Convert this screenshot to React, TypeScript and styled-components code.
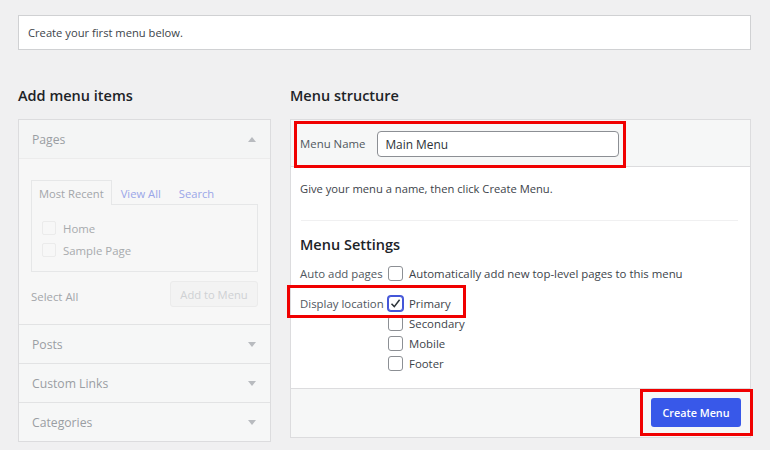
import React from "react";
import styled, { createGlobalStyle } from "styled-components";

const Global = createGlobalStyle`
  html, body { margin: 0; padding: 0; background: #f0f0f1; }
  body { font-family: "Open Sans", "Noto Sans", sans-serif; font-size: 11.2px; color: #3c434a; }
  * { box-sizing: border-box; }
`;

const Page = styled.div`
  width: 770px;
  height: 450px;
  padding: 15px 19px 0 18px;
  overflow: hidden;
`;

const Notice = styled.div`
  height: 35px;
  background: #fff;
  border: 1px solid #d0d1d3;
  display: flex;
  align-items: center;
  padding: 0 9px;
  font-size: 11.2px;
  color: #3c434a;
`;

const Columns = styled.div`
  display: grid;
  grid-template-columns: 253px 461px;
  column-gap: 19px;
  margin-top: 36px;
`;

const Column = styled.div`
  display: flex;
  flex-direction: column;
`;

const Heading = styled.h2`
  margin: 0 0 13px;
  height: 20px;
  line-height: 20px;
  font-size: 14.5px;
  font-weight: 600;
  color: #1d2327;
`;

/* ---------- Left panel ---------- */

const SidePanel = styled.div`
  border: 1px solid #dcdcde;
  background: #f6f7f7;
  color: #a7aaad;
`;

const SectionHead = styled.div<{ $first?: boolean }>`
  height: 39px;
  display: flex;
  align-items: center;
  justify-content: space-between;
  padding: 0 14px 0 13px;
  border-top: ${(p) => (p.$first ? "none" : "1px solid #e2e3e4")};
  border-bottom: ${(p) => (p.$first ? "1px solid #ececec" : "none")};
  background: ${(p) => (p.$first ? "#f4f5f5" : "transparent")};
  font-size: 12.2px;
  color: #9a9ea3;
`;

const Arrow = styled.span<{ $up?: boolean }>`
  width: 0;
  height: 0;
  border-left: 4px solid transparent;
  border-right: 4px solid transparent;
  ${(p) =>
    p.$up
      ? "border-bottom: 5px solid #b8bbbf;"
      : "border-top: 5px solid #b8bbbf;"}
`;

const PagesBody = styled.div`
  padding: 21px 12px 17px 12px;
  background: #f7f7f7;
`;

const Tabs = styled.div`
  display: flex;
  align-items: flex-end;
  height: 24px;
`;

const Tab = styled.div<{ $active?: boolean }>`
  height: 25px;
  display: flex;
  align-items: center;
  padding: 0 ${(p) => (p.$active ? "7px" : "8px")};
  border: ${(p) => (p.$active ? "1px solid #e6e7e8" : "1px solid transparent")};
  border-bottom: none;
  background: ${(p) => (p.$active ? "#f7f7f7" : "transparent")};
  color: ${(p) => (p.$active ? "#a3a6aa" : "#9aa6e8")};
  margin-bottom: -1px;
  position: relative;
  font-size: 11.2px;
`;

const TabPanel = styled.div`
  border: 1px solid #e6e7e8;
  height: 68px;
  padding: 15px 10px 0;
  display: flex;
  flex-direction: column;
  gap: 6px;
`;

const ItemRow = styled.label`
  display: flex;
  align-items: center;
  gap: 7px;
  height: 16px;
  color: #a7aaad;
  font-size: 11.4px;
`;

const GhostBox = styled.span`
  width: 14px;
  height: 14px;
  border: 1px solid #ebebeb;
  border-radius: 2px;
  background: #f7f7f7;
`;

const SelectRow = styled.div`
  margin-top: 9px;
  display: flex;
  align-items: center;
  justify-content: space-between;
  height: 26px;
  font-size: 11.4px;
  color: #a3a6aa;
`;

const SelectText = styled.span`
  padding-top: 4px;
`;

const GhostButton = styled.span`
  width: 88px;
  height: 26px;
  border: 1px solid #ebebeb;
  border-radius: 3px;
  background: #f3f3f3;
  color: #cfd1d3;
  display: flex;
  align-items: center;
  justify-content: center;
  font-size: 11.2px;
`;

/* ---------- Right panel ---------- */

const MainPanel = styled.div`
  border: 1px solid #dcdcde;
  background: #fff;
  display: flex;
  flex-direction: column;
  height: 319px;
`;

const PanelHeader = styled.div`
  height: 47px;
  background: #f6f7f7;
  border-bottom: 1px solid #dcdcde;
  padding: 1px 0 0 3px;
`;

const Highlight = styled.div`
  border: 3px solid #f00000;
  position: relative;
  z-index: 1;
`;

const NameBox = styled(Highlight)`
  width: 332px;
  height: 47px;
  display: flex;
  align-items: center;
  padding: 0 4px 2px 3px;
  gap: 12px;
`;

const Label = styled.span`
  font-size: 11.4px;
  color: #50575e;
  white-space: nowrap;
`;

const NameInput = styled.div`
  flex: 1;
  height: 26px;
  border: 1px solid #8c8f94;
  border-radius: 4px;
  background: #fff;
  display: flex;
  align-items: center;
  padding: 0 7px;
  font-size: 11.9px;
  color: #2c3338;
`;

const PanelBody = styled.div`
  flex: 1;
  padding: 0 12px 0 9px;
`;

const Hint = styled.p`
  margin: 13px 0 0;
  height: 17px;
  line-height: 17px;
  font-size: 11.2px;
  color: #3c434a;
`;

const Divider = styled.hr`
  border: none;
  border-top: 1px solid #f0f0f1;
  margin: 23px 0 0 1px;
`;

const SubHeading = styled.h3`
  margin: 14px 0 0;
  height: 20px;
  line-height: 20px;
  font-size: 14.5px;
  font-weight: 600;
  color: #1d2327;
`;

const SettingsGrid = styled.div`
  display: grid;
  grid-template-columns: 88px 1fr;
  margin-top: 8px;
`;

const Options = styled.div`
  display: flex;
  flex-direction: column;
`;

const OptionRow = styled.div`
  display: flex;
  align-items: center;
  height: 20px;
  gap: 6px;
  font-size: 11.4px;
  color: #3c434a;
`;

const GridLabel = styled.div`
  height: 20px;
  display: flex;
  align-items: center;
  font-size: 11.4px;
  color: #50575e;
`;

const LocationBox = styled(Highlight)`
  display: grid;
  grid-template-columns: 88px auto;
  align-items: center;
  width: 179px;
  height: 33px;
  margin: 2px 0 0 -13px;
  padding: 3px 0 0 10px;
`;

const LocationRows = styled.div`
  display: flex;
  flex-direction: column;
  margin: -5px 0 0 88px;
`;

const Box = styled.span<{ $checked?: boolean }>`
  width: 15px;
  height: 15px;
  flex: none;
  border: 1px solid ${(p) => (p.$checked ? "#4456d8" : "#8c8f94")};
  box-shadow: ${(p) => (p.$checked ? "0 0 0 1px #4456d8" : "none")};
  border-radius: 3px;
  background: #fff;
  display: flex;
  align-items: center;
  justify-content: center;
`;

const PanelFooter = styled.div`
  height: 49px;
  background: #f6f7f7;
  border-top: 1px solid #dcdcde;
  display: flex;
  justify-content: flex-end;
  align-items: flex-start;
`;

const ButtonBox = styled(Highlight)`
  width: 113px;
  height: 47px;
  margin-right: -3px;
  display: flex;
  align-items: center;
  justify-content: center;
  padding-right: 1px;
`;

const PrimaryButton = styled.button`
  width: 90px;
  height: 29px;
  border: none;
  border-radius: 3px;
  background: #3858e9;
  color: #fff;
  font-family: inherit;
  font-size: 10.8px;
  font-weight: 600;
  padding: 0;
`;

const Check = () => (
  <svg width="11" height="11" viewBox="0 0 11 11">
    <path d="M1.5 5.8 L4.3 8.6 L9.6 1.8" fill="none" stroke="#2c3338" strokeWidth="1.5" />
  </svg>
);

const CheckItem: React.FC<{ label: string; checked?: boolean }> = ({ label, checked }) => (
  <OptionRow>
    <Box $checked={checked}>{checked && <Check />}</Box>
    {label}
  </OptionRow>
);

export default function App() {
  return (
    <>
      <Global />
      <Page>
        <Notice>Create your first menu below.</Notice>
        <Columns>
          <Column>
            <Heading>Add menu items</Heading>
            <SidePanel>
              <SectionHead $first>
                Pages <Arrow $up />
              </SectionHead>
              <PagesBody>
                <Tabs>
                  <Tab $active>Most Recent</Tab>
                  <Tab>View All</Tab>
                  <Tab>Search</Tab>
                </Tabs>
                <TabPanel>
                  <ItemRow>
                    <GhostBox />
                    Home
                  </ItemRow>
                  <ItemRow>
                    <GhostBox />
                    Sample Page
                  </ItemRow>
                </TabPanel>
                <SelectRow>
                  <SelectText>Select All</SelectText>
                  <GhostButton>Add to Menu</GhostButton>
                </SelectRow>
              </PagesBody>
              <SectionHead>
                Posts <Arrow />
              </SectionHead>
              <SectionHead>
                Custom Links <Arrow />
              </SectionHead>
              <SectionHead>
                Categories <Arrow />
              </SectionHead>
            </SidePanel>
          </Column>
          <Column>
            <Heading>Menu structure</Heading>
            <MainPanel>
              <PanelHeader>
                <NameBox>
                  <Label>Menu Name</Label>
                  <NameInput>Main Menu</NameInput>
                </NameBox>
              </PanelHeader>
              <PanelBody>
                <Hint>Give your menu a name, then click Create Menu.</Hint>
                <Divider />
                <SubHeading>Menu Settings</SubHeading>
                <SettingsGrid>
                  <GridLabel>Auto add pages</GridLabel>
                  <Options>
                    <CheckItem label="Automatically add new top-level pages to this menu" />
                  </Options>
                </SettingsGrid>
                <LocationBox>
                  <GridLabel>Display location</GridLabel>
                  <CheckItem label="Primary" checked />
                </LocationBox>
                <LocationRows>
                  <CheckItem label="Secondary" />
                  <CheckItem label="Mobile" />
                  <CheckItem label="Footer" />
                </LocationRows>
              </PanelBody>
              <PanelFooter>
                <ButtonBox>
                  <PrimaryButton>Create Menu</PrimaryButton>
                </ButtonBox>
              </PanelFooter>
            </MainPanel>
          </Column>
        </Columns>
      </Page>
    </>
  );
}
